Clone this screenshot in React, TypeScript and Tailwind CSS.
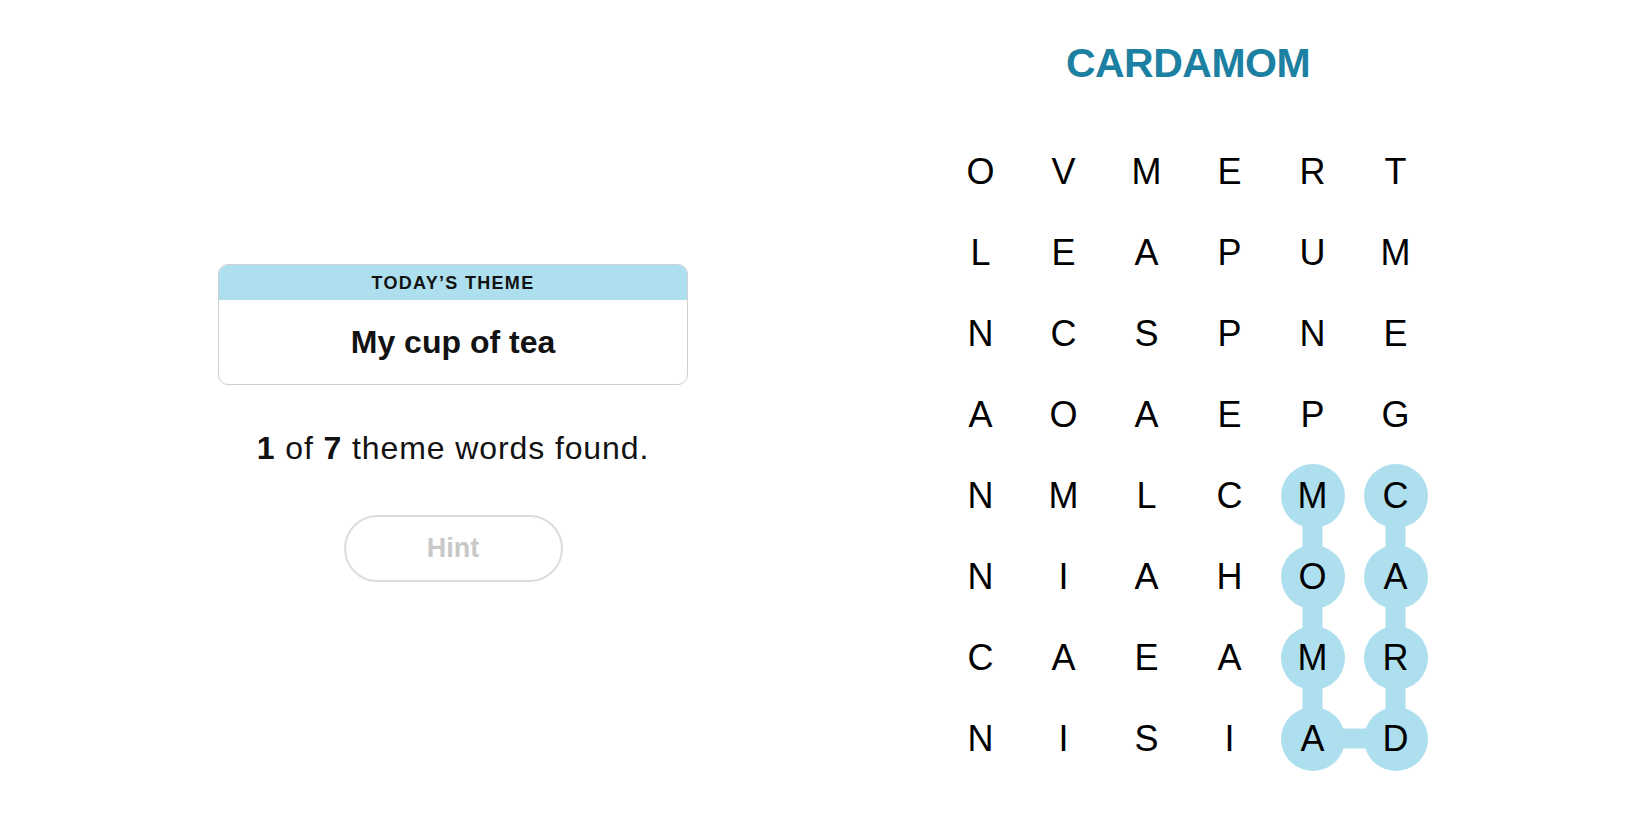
import React from "react";

const ROWS = [
  "OVMERT",
  "LEAPUM",
  "NCSPNE",
  "AOAEPG",
  "NMLCMC",
  "NIAHOA",
  "CAEAMR",
  "NISIAD",
];

const FOUND = new Set(["4-4", "5-4", "6-4", "7-4", "4-5", "5-5", "6-5", "7-5"]);

const CW = 83;
const RH = 81;
const cx = (c: number) => c * CW + CW / 2;
const cy = (r: number) => r * RH + RH / 2;

export default function App() {
  const path = [
    [5, 4],
    [5, 7],
    [4, 7],
    [4, 4],
  ]
    .map(([c, r]) => `${cx(c)},${cy(r)}`)
    .join(" ");

  return (
    <div className="w-[1650px] h-[825px] bg-white flex font-['Liberation_Sans',Arial,sans-serif] text-black">
      <div className="w-[906px] flex flex-col items-center pt-[264px]">
        <div className="w-[470px] h-[121px] rounded-[10px] border border-[#cfcfcf] overflow-hidden flex flex-col">
          <div className="h-[35px] bg-[#aedfee] flex items-center justify-center">
            <span className="text-[18px] leading-none font-semibold tracking-[1.3px] text-[#121212]">
              TODAY’S THEME
            </span>
          </div>
          <div className="flex-1 flex items-center justify-center">
            <span className="text-[32px] leading-none font-bold text-[#121212]">My cup of tea</span>
          </div>
        </div>
        <p className="mt-[47px] text-[32px] leading-none tracking-[0.9px] text-[#121212]">
          <span className="font-bold">1</span> of <span className="font-bold">7</span> theme words found.
        </p>
        <button className="mt-[51px] w-[219px] h-[67px] rounded-full border-2 border-[#dcdcdc] bg-white text-[27px] font-bold text-[#c8c8c8] leading-none">
          Hint
        </button>
      </div>
      <div className="w-[564px] flex flex-col items-center pt-[43px]">
        <h1 className="text-[41px] leading-none font-bold tracking-[-0.5px] text-[#1b80a1]">CARDAMOM</h1>
        <div className="relative mt-[47px] grid grid-cols-[repeat(6,83px)] grid-rows-[repeat(8,81px)]">
          <svg
            className="absolute left-0 top-0 w-[498px] h-[648px]"
            viewBox={`0 0 ${CW * 6} ${RH * 8}`}
          >
            <polyline points={path} fill="none" stroke="#aedfee" strokeWidth={20} />
          </svg>
          {ROWS.map((row, r) =>
            row.split("").map((ch, c) => {
              const found = FOUND.has(`${r}-${c}`);
              return (
                <div key={`${r}-${c}`} className="relative flex items-center justify-center">
                  <div
                    className={
                      found
                        ? "w-[64px] h-[64px] rounded-full bg-[#aedfee] flex items-center justify-center"
                        : "w-[64px] h-[64px] flex items-center justify-center"
                    }
                  >
                    <span className="text-[36px] leading-none">{ch}</span>
                  </div>
                </div>
              );
            })
          )}
        </div>
      </div>
    </div>
  );
}
